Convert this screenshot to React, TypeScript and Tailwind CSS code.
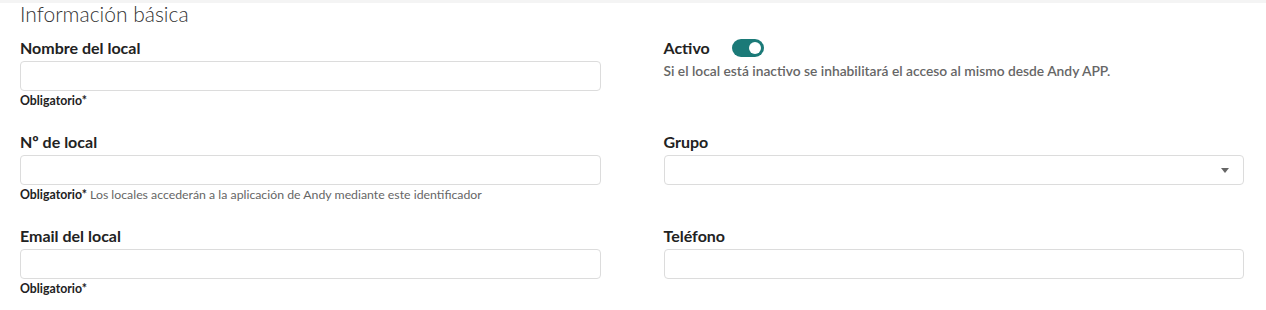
import React from "react";

function Field({ label, help, children }: { label: string; help?: React.ReactNode; children: React.ReactNode }) {
    return (
        <div className="flex flex-col h-[94px]">
            <label className="text-[16px] font-bold text-[#222] leading-[20px] mt-[1px]">{label}</label>
            <div className="mt-[3px]">{children}</div>
            {help && <div className="text-[12.3px] leading-[16px] mt-[2px]">{help}</div>}
        </div>
    );
}

function Input() {
    return <div className="h-[30px] w-full rounded-[4px] border border-[#dcdcdc] bg-white" />;
}

export default function App() {
    return (
        <div className="w-[1266px] h-[310px] bg-white" style={{ fontFamily: "Lato, 'Open Sans', sans-serif" }}>
            <div className="h-[3px] bg-[#f4f4f4]" />
            <div className="pl-[20px] pr-[22px]">
                <h2 className="text-[21px] font-light text-[#333] leading-[24px] -mt-[1px]">Información básica</h2>
                <div className="grid grid-cols-2 gap-x-[63px] mt-[11px]">
                    <Field label="Nombre del local" help={<span className="font-bold text-[#222]">Obligatorio*</span>}>
                        <Input />
                    </Field>
                    <div className="flex flex-col">
                        <div className="flex items-center gap-[22px] h-[22px]">
                            <span className="text-[16px] font-bold text-[#222]">Activo</span>
                            <div className="w-[32px] h-[18px] rounded-full bg-[#1b7a78] relative">
                                <div className="absolute right-[3px] top-[3px] w-[12px] h-[12px] rounded-full bg-white" />
                            </div>
                        </div>
                        <p className="text-[13.8px] text-[#666] mt-[2px] font-semibold">Si el local está inactivo se inhabilitará el acceso al mismo desde Andy APP.</p>
                    </div>
                    <Field
                        label="Nº de local"
                        help={
                            <>
                                <span className="font-bold text-[#222]">Obligatorio*</span>{" "}
                                <span className="text-[#666]">Los locales accederán a la aplicación de Andy mediante este identificador</span>
                            </>
                        }
                    >
                        <Input />
                    </Field>
                    <Field label="Grupo">
                        <div className="h-[30px] w-full rounded-[4px] border border-[#dcdcdc] bg-white flex items-center justify-end pr-[14px]">
                            <svg width="8" height="5" viewBox="0 0 8 5">
                                <path d="M0 0h8L4 5z" fill="#666" />
                            </svg>
                        </div>
                    </Field>
                    <Field label="Email del local" help={<span className="font-bold text-[#222]">Obligatorio*</span>}>
                        <Input />
                    </Field>
                    <Field label="Teléfono">
                        <Input />
                    </Field>
                </div>
            </div>
        </div>
    );
}
